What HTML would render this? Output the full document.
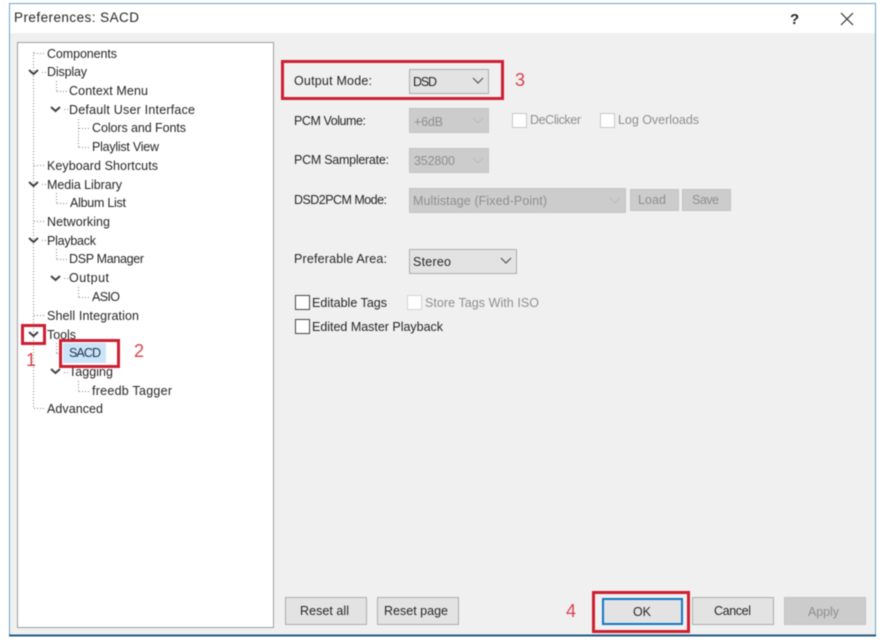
<!DOCTYPE html>
<html lang="en">
<head>
<meta charset="utf-8">
<title>Preferences: SACD</title>
<style>
html,body{margin:0;padding:0;background:#fff;width:880px;height:642px;overflow:hidden}
svg{display:block;filter:blur(.4px)}
text{font-family:"Liberation Sans",sans-serif;font-size:12.5px;fill:#262626}
.d{fill:#8f8f8f}
.n{font-size:18px;fill:#d8404f}
.t path{fill:none;stroke:#808080;stroke-width:1;stroke-dasharray:1 2}
.c{fill:none;stroke:#444;stroke-width:2}
.a{fill:none;stroke:#555;stroke-width:1.2}
.r{fill:none;stroke:#cc1f30;stroke-width:3}
.b{fill:#e3e3e3;stroke:#adadad}
.g{fill:#cccccc;stroke:#c4c4c4}
</style>
</head>
<body>
<svg width="880" height="642" viewBox="0 0 880 642" xmlns="http://www.w3.org/2000/svg">
<rect width="880" height="642" fill="#fff"/>
<!-- window -->
<rect x="9.5" y="3.5" width="866" height="632" fill="#f0f0f0" stroke="#6ca6c4"/>
<rect x="10" y="4" width="865" height="29" fill="#fff"/>
<path d="M9 635.5H876" stroke="#1f5d80" stroke-width="2"/>
<text x="14" y="22" textLength="125" style="font-size:13.5px">Preferences: SACD</text>
<text x="790" y="24" style="font-size:15px;font-weight:bold" fill="#333">?</text>
<path d="M841 13L853 25M853 13L841 25" stroke="#333" stroke-width="1.2" fill="none"/>

<!-- tree panel -->
<rect x="17.5" y="42.5" width="256" height="585" fill="#fff" stroke="#a0a0a0"/>
<rect x="63" y="343" width="43" height="20" fill="#cce4f7"/>
<g class="t">
<path d="M33.500 52V408"/>
<path d="M34 53.500H46M34 165.500H46M34 221.500H46M34 315.500H46M34 408.500H46M42 72.500H46M42 184.500H46M42 240.500H46"/>
<path d="M56.500 81V91M56.500 193V203M56.500 249V259M56.500 343V353"/>
<path d="M57 91.500H68M57 203.500H68M57 259.500H68M57 353.500H62M64 109.500H68M64 278.500H68M64 372.500H68"/>
<path d="M78.500 119V147M78.500 287V297M78.500 381V391"/>
<path d="M79 128.500H91M79 147.500H91M79 297.500H91M79 391.500H91"/>
</g>
<g class="c">
<path d="M29 70L33.500 74L38 70"/>
<path d="M29 182L33.500 186L38 182"/>
<path d="M29 238L33.500 242L38 238"/>
<path d="M29 332L33.500 336L38 332"/>
<path d="M51 107L55.500 111L60 107"/>
<path d="M51 276L55.500 280L60 276"/>
<path d="M51 369L55.500 373L60 369"/>
</g>
<text x="47" y="58" textLength="70">Components</text>
<text x="47" y="76" textLength="40">Display</text>
<text x="69" y="95" textLength="79">Context Menu</text>
<text x="69" y="114" textLength="126">Default User Interface</text>
<text x="92" y="132" textLength="94">Colors and Fonts</text>
<text x="92" y="151" textLength="67">Playlist View</text>
<text x="47" y="170" textLength="111">Keyboard Shortcuts</text>
<text x="47" y="189" textLength="75">Media Library</text>
<text x="70" y="207" textLength="56">Album List</text>
<text x="47" y="226" textLength="63">Networking</text>
<text x="47" y="245" textLength="49">Playback</text>
<text x="69" y="263" textLength="75">DSP Manager</text>
<text x="69" y="282" textLength="40">Output</text>
<text x="92" y="301" textLength="28">ASIO</text>
<text x="47" y="320" textLength="92">Shell Integration</text>
<text x="47" y="339" textLength="29">Tools</text>
<text x="69" y="357" textLength="32" style="fill:#1c3550">SACD</text>
<text x="69" y="376" textLength="44">Tagging</text>
<text x="92" y="395" textLength="80">freedb Tagger</text>
<text x="47" y="413" textLength="56">Advanced</text>

<!-- options -->
<text x="294" y="85" textLength="78">Output Mode:</text>
<rect class="b" x="409.500" y="69.500" width="79" height="24"/>
<text x="413" y="86" textLength="24">DSD</text>
<path class="a" d="M473 78L478 83L483 78"/>

<text x="294" y="125" textLength="72">PCM Volume:</text>
<rect class="g" x="409.500" y="108.500" width="79" height="24"/>
<text class="d" x="414" y="126" textLength="29">+6dB</text>
<path d="M473 118L478 123L483 118" fill="none" stroke="#bbb"/>
<rect x="512.500" y="113.500" width="14" height="14" fill="#fff" stroke="#c8c8c8"/>
<text class="d" x="530" y="124" textLength="51">DeClicker</text>
<rect x="600.500" y="113.500" width="14" height="14" fill="#fff" stroke="#c8c8c8"/>
<text class="d" x="618" y="124" textLength="81">Log Overloads</text>

<text x="294" y="164" textLength="95">PCM Samplerate:</text>
<rect class="g" x="409.500" y="148.500" width="79" height="24"/>
<text class="d" x="414" y="165" textLength="41">352800</text>
<path d="M473 158L478 163L483 158" fill="none" stroke="#bbb"/>

<text x="294" y="204" textLength="93">DSD2PCM Mode:</text>
<rect class="g" x="409.500" y="188.500" width="216" height="24"/>
<text class="d" x="413" y="205" textLength="134">Multistage (Fixed-Point)</text>
<path d="M610 198L615 203L620 198" fill="none" stroke="#bbb"/>
<rect class="g" x="630.500" y="189.500" width="48" height="21"/>
<text class="d" x="638" y="204" textLength="28">Load</text>
<rect class="g" x="682.500" y="189.500" width="48" height="21"/>
<text class="d" x="692" y="204" textLength="27">Save</text>

<text x="294" y="263" textLength="93">Preferable Area:</text>
<rect class="b" x="409.500" y="249.500" width="107" height="24"/>
<text x="413" y="266" textLength="38">Stereo</text>
<path class="a" d="M501 258L506 263L511 258"/>

<rect x="295.500" y="295.500" width="14" height="14" fill="#fff" stroke="#444"/>
<text x="312" y="307" textLength="75">Editable Tags</text>
<rect x="407.500" y="295.500" width="14" height="14" fill="#fff" stroke="#d4d4d4"/>
<text class="d" x="425" y="307" textLength="114">Store Tags With ISO</text>
<rect x="295.500" y="319.500" width="14" height="14" fill="#fff" stroke="#444"/>
<text x="312" y="331" textLength="131">Edited Master Playback</text>

<!-- bottom buttons -->
<rect class="b" x="285.500" y="597.500" width="81" height="27"/>
<text x="300" y="615" textLength="49">Reset all</text>
<rect class="b" x="377.500" y="597.500" width="81" height="27"/>
<text x="384" y="615" textLength="64">Reset page</text>
<rect x="603" y="599" width="79" height="25" fill="#e3e3e3" stroke="#0f78c4" stroke-width="2"/>
<text x="633" y="616" textLength="18">OK</text>
<rect class="b" x="692.500" y="597.500" width="81" height="27"/>
<text x="714" y="615" textLength="37">Cancel</text>
<rect class="g" x="784.500" y="597.500" width="81" height="27"/>
<text class="d" x="808" y="616" textLength="31">Apply</text>

<!-- annotations -->
<rect class="r" x="22.500" y="325.500" width="22" height="18"/>
<rect class="r" x="60.500" y="340.500" width="58" height="26"/>
<rect class="r" x="282.500" y="61.500" width="220" height="37"/>
<rect class="r" x="593.500" y="592.500" width="95" height="39"/>
<text class="n" x="26" y="366">1</text>
<text class="n" x="134" y="357">2</text>
<text class="n" x="515" y="86">3</text>
<text class="n" x="566" y="617">4</text>
</svg>
</body>
</html>
